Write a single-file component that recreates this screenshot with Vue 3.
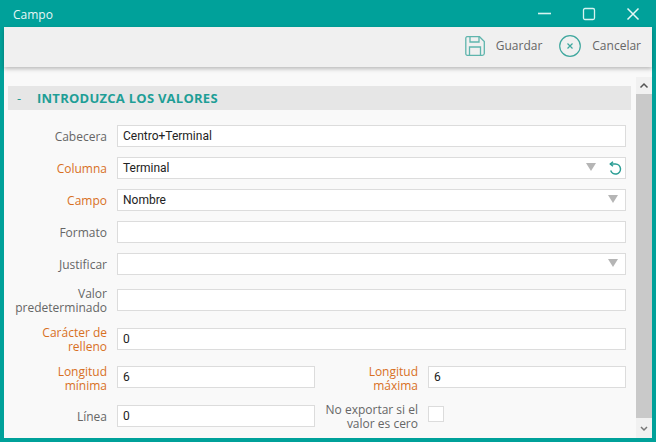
<script setup>
const rows = [
  { label: 'Cabecera', value: 'Centro+Terminal' },
  { label: 'Columna', value: 'Terminal', req: true, select: true, reset: true },
  { label: 'Campo', value: 'Nombre', req: true, select: true },
  { label: 'Formato', value: '' },
  { label: 'Justificar', value: '', select: true },
  { label: 'Valor\npredeterminado', value: '', cls: 'tall first' },
  { label: 'Carácter de\nrelleno', value: '0', req: true, cls: 'tall second-tall' },
]
const minLabel = 'Longitud\nmínima'
const maxLabel = 'Longitud\nmáxima'
const zeroLabel = 'No exportar si el\nvalor es cero'
</script>

<template>
  <div class="window">
    <header class="titlebar">
      <span class="title">Campo</span>
      <div class="controls">
        <svg width="16" height="16" viewBox="0 0 16 16"><path d="M1 7.500h13" stroke="#d6f3f0" stroke-width="1.600" fill="none"/></svg>
        <svg width="16" height="16" viewBox="0 0 16 16"><rect x="2.500" y="2.500" width="11" height="11" rx="1.500" stroke="#d6f3f0" stroke-width="1.300" fill="none"/></svg>
        <svg width="16" height="16" viewBox="0 0 16 16"><path d="M2.500 2.500l11 11M13.500 2.500l-11 11" stroke="#e6f7f5" stroke-width="1.500" fill="none"/></svg>
      </div>
    </header>
    <div class="toolbar">
      <button class="tool">
        <svg width="20" height="20" viewBox="0 0 20 20" fill="none" stroke="#5fb5ad" stroke-width="1.300">
          <path d="M1.500 .7h13l4.800 4.800v12a2 2 0 0 1-2 1.800h-15a1.500 1.500 0 0 1-1.500-1.500v-15.600a1.500 1.500 0 0 1 1.500-1.500z"/>
          <path d="M5 .7v5.300h9v-5.300"/>
          <path d="M4.500 19.300v-8.300h11v8.300"/>
        </svg>
        <span>Guardar</span>
      </button>
      <button class="tool">
        <svg width="22" height="22" viewBox="0 0 22 22" fill="none" stroke="#3fa79e" stroke-width="1.200">
          <circle cx="11" cy="11" r="10.300"/>
          <path d="M8.500 8.500l5 5M13.500 8.500l-5 5"/>
        </svg>
        <span>Cancelar</span>
      </button>
    </div>
    <div class="body">
      <main class="content">
        <div class="section"><span class="dash">-</span><span>INTRODUZCA LOS VALORES</span></div>
        <div class="form">
          <div v-for="r in rows" :key="r.label" class="row" :class="r.cls">
            <label :class="{ req: r.req }">{{ r.label }}</label>
            <div class="field">
              <span>{{ r.value }}</span>
              <i v-if="r.select" class="arrow" :class="{ shifted: r.reset }"></i>
              <svg v-if="r.reset" class="reset" width="14" height="14" viewBox="0 0 14 14" fill="none" stroke="#2a9d94" stroke-width="1.500">
                <path d="M2 3h5.500a5 5 0 1 1-4.800 6.500"/>
                <path d="M5 .7l-2.700 2.300 2.700 2.300"/>
              </svg>
            </div>
          </div>
          <div class="row tall pair">
            <label class="req low">{{ minLabel }}</label>
            <div class="field"><span>6</span></div>
            <label class="req second low">{{ maxLabel }}</label>
            <div class="field"><span>6</span></div>
          </div>
          <div class="row tall pair last">
            <label>Línea</label>
            <div class="field"><span>0</span></div>
            <label class="second">{{ zeroLabel }}</label>
            <div class="check-wrap"><div class="check"></div></div>
          </div>
        </div>
      </main>
      <aside class="scrollbar">
        <svg width="16" height="17" viewBox="0 0 16 17"><path d="M4.500 10.500l3.500-3.500 3.500 3.500" fill="none" stroke="#555" stroke-width="1.500"/></svg>
        <div class="thumb"></div>
        <svg width="16" height="20" viewBox="0 0 16 20"><path d="M5 9l3 3 3-3" fill="none" stroke="#777" stroke-width="1.500"/></svg>
      </aside>
    </div>
  </div>
</template>

<style>
html, body { margin: 0; background: #00a19a; }
</style>

<style scoped>
.window {
  width: 656px;
  height: 442px;
  box-sizing: border-box;
  background: #00a19a;
  padding: 0 4px 4px;
  display: flex;
  flex-direction: column;
  font-family: "Open Sans", sans-serif;
  overflow: hidden;
}
.titlebar {
  height: 27px;
  flex: none;
  display: flex;
  align-items: center;
  justify-content: space-between;
}
.title { color: #e8f7f6; font-size: 12px; padding: 2px 0 0 9px; }
.controls { display: flex; gap: 28px; padding-right: 11px; margin-top: 1px; }
.toolbar {
  height: 40px;
  flex: none;
  background: #f0f0f0;
  display: flex;
  justify-content: flex-end;
  align-items: center;
  gap: 17px;
  padding-right: 11px;
  box-shadow: 0 2px 4px rgba(0, 0, 0, .25);
  position: relative;
  z-index: 1;
}
.tool {
  border: 0;
  background: none;
  padding: 0;
  display: flex;
  align-items: center;
  gap: 11px;
  color: #666;
  font: 12px "Open Sans", sans-serif;
  margin-bottom: 3px;
}
.body { flex: 1; display: flex; background: #f9f9f9; min-height: 0; }
.content { flex: 1; padding: 19px 5px 0 4px; min-width: 0; }
.section {
  height: 24px;
  background: #e6e6e6;
  display: flex;
  align-items: center;
  color: #1e9e96;
  font-size: 13px;
  font-weight: 700;
  letter-spacing: .25px;
}
.dash { width: 29px; padding-left: 9px; box-sizing: border-box; font-weight: 400; }
.form { padding: 15px 5px 0 0; display: flex; flex-direction: column; gap: 10px; }
.row { display: flex; align-items: center; height: 22px; }
.row.tall { height: 30px; }
.row.second-tall { margin-top: -1px; }
.row.pair { margin-top: -2px; }
.row.last { margin-top: -1px; }
label {
  width: 99px;
  flex: none;
  margin-right: 10px;
  padding-top: 2px;
  text-align: right;
  font-size: 12px;
  line-height: 14.5px;
  color: #666;
  white-space: pre-line;
}
label.low { padding-top: 4px; }
label.req { color: #d8701f; }
label.second { width: 100px; margin-left: 3px; }
.field {
  flex: 1;
  min-width: 0;
  height: 22px;
  box-sizing: border-box;
  background: #fff;
  border: 1px solid #dcdcdc;
  padding-left: 5px;
  display: flex;
  align-items: center;
  position: relative;
  font: 12px Roboto, sans-serif;
  color: #222;
}
.pair .field, .check-wrap { flex: none; width: 198px; }
.arrow {
  position: absolute;
  right: 7px;
  top: 5px;
  width: 0;
  height: 0;
  border-left: 5px solid transparent;
  border-right: 5px solid transparent;
  border-top: 8px solid #b5b5b5;
}
.arrow.shifted { right: 29px; }
.reset { position: absolute; right: 3px; top: 3px; }
.check-wrap { align-self: flex-start; padding-top: 5px; }
.check {
  width: 16px;
  height: 16px;
  box-sizing: border-box;
  background: #fff;
  border: 1px solid #dcdcdc;
}
.scrollbar {
  width: 16px;
  flex: none;
  margin-top: 10px;
  background: #f1f1f1;
  display: flex;
  flex-direction: column;
}
.scrollbar svg { flex: none; }
.thumb { flex: 1; background: #c9c9c9; }
</style>
